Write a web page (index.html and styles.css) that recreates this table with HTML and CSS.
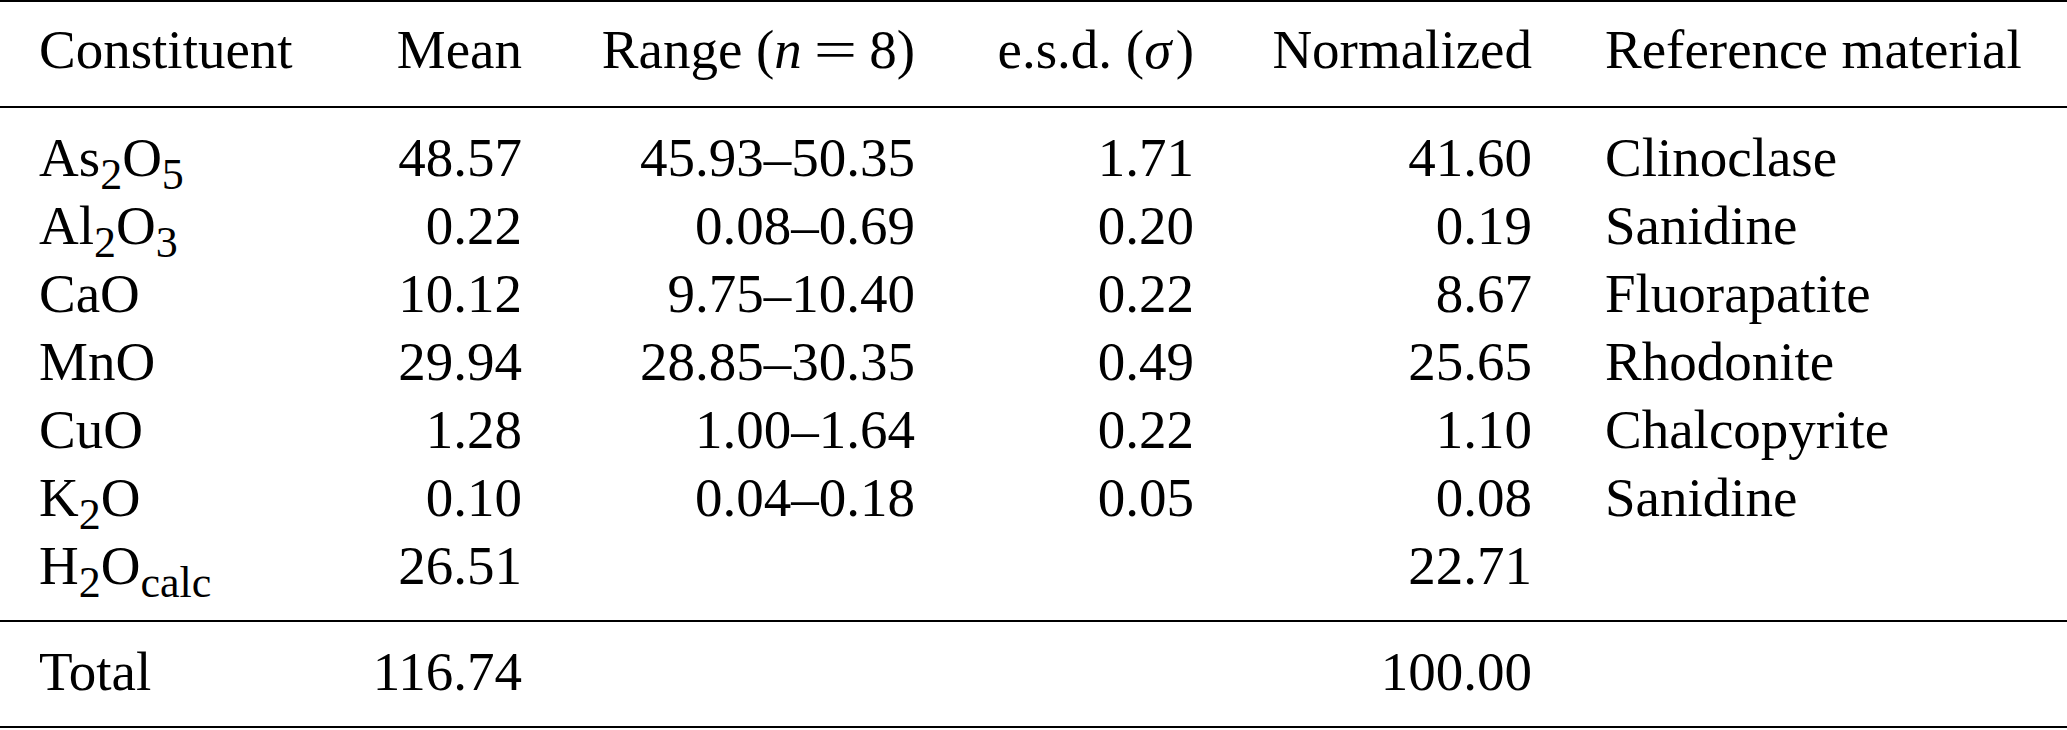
FILE: index.html
```html
<!DOCTYPE html>
<html lang="en">
<head>
<meta charset="utf-8">
<title>Constituents</title>
<link rel="stylesheet" href="styles.css">
</head>
<body>
<table class="tbl">
  <colgroup>
    <col class="c1"><col class="c2"><col class="c3"><col class="c4"><col class="c5"><col class="c6">
  </colgroup>
  <thead>
    <tr>
      <th class="l first">Constituent</th>
      <th class="r">Mean</th>
      <th class="r">Range (<i>n</i><span class="eq">=</span>8)</th>
      <th class="r">e.s.d. (<i class="sig">σ</i>)</th>
      <th class="r">Normalized</th>
      <th class="l last">Reference material</th>
    </tr>
  </thead>
  <tbody class="body">
    <tr class="top"><td class="l first">As<sub>2</sub>O<sub>5</sub></td><td class="r">48.57</td><td class="r">45.93–50.35</td><td class="r">1.71</td><td class="r">41.60</td><td class="l last">Clinoclase</td></tr>
    <tr><td class="l first">Al<sub>2</sub>O<sub>3</sub></td><td class="r">0.22</td><td class="r">0.08–0.69</td><td class="r">0.20</td><td class="r">0.19</td><td class="l last">Sanidine</td></tr>
    <tr><td class="l first">CaO</td><td class="r">10.12</td><td class="r">9.75–10.40</td><td class="r">0.22</td><td class="r">8.67</td><td class="l last">Fluorapatite</td></tr>
    <tr><td class="l first">MnO</td><td class="r">29.94</td><td class="r">28.85–30.35</td><td class="r">0.49</td><td class="r">25.65</td><td class="l last">Rhodonite</td></tr>
    <tr><td class="l first">CuO</td><td class="r">1.28</td><td class="r">1.00–1.64</td><td class="r">0.22</td><td class="r">1.10</td><td class="l last">Chalcopyrite</td></tr>
    <tr><td class="l first">K<sub>2</sub>O</td><td class="r">0.10</td><td class="r">0.04–0.18</td><td class="r">0.05</td><td class="r">0.08</td><td class="l last">Sanidine</td></tr>
    <tr class="bot"><td class="l first">H<sub>2</sub>O<sub>calc</sub></td><td class="r">26.51</td><td class="r"></td><td class="r"></td><td class="r">22.71</td><td class="l last"></td></tr>
  </tbody>
  <tfoot>
    <tr><td class="l first">Total</td><td class="r">116.74</td><td class="r"></td><td class="r"></td><td class="r">100.00</td><td class="l last"></td></tr>
  </tfoot>
</table>
</body>
</html>
```
FILE: styles.css
```css
html, body {
  margin: 0;
  padding: 0;
  background: #ffffff;
}
body {
  font-family: "Liberation Serif", "Times New Roman", serif;
  color: #000000;
  font-size: 55px;
  line-height: 68px;
}
.tbl {
  width: 2067px;
  table-layout: fixed;
  border-collapse: collapse;
  border-top: 2px solid #000000;
  border-bottom: 2px solid #000000;
}
.c1 { width: 328px; }
.c2 { width: 230px; }
.c3 { width: 393px; }
.c4 { width: 279px; }
.c5 { width: 338px; }
.c6 { width: 499px; }
.tbl th, .tbl td {
  padding: 0 36px;
  font-weight: normal;
  white-space: nowrap;
  vertical-align: baseline;
}
.tbl .l { text-align: left; }
.tbl .r { text-align: right; }
.tbl .first { padding-left: 39px; }
.tbl .last { padding-left: 37px; padding-right: 0; }
.tbl thead th {
  padding-top: 14px;
  padding-bottom: 22px;
  border-bottom: 2px solid #000000;
}
.tbl .top td { padding-top: 16px; }
.tbl .bot td {
  padding-bottom: 20px;
  border-bottom: 2px solid #000000;
}
.tbl tfoot td {
  padding-top: 16px;
  padding-bottom: 20px;
}
sub {
  font-size: 0.8em;
  line-height: 0;
  vertical-align: -13px;
}
.eq {
  display: inline-block;
  margin: 0 0.33em;
  transform: scaleX(1.4);
}
.sig {
  margin-right: 0.08em;
}
```
